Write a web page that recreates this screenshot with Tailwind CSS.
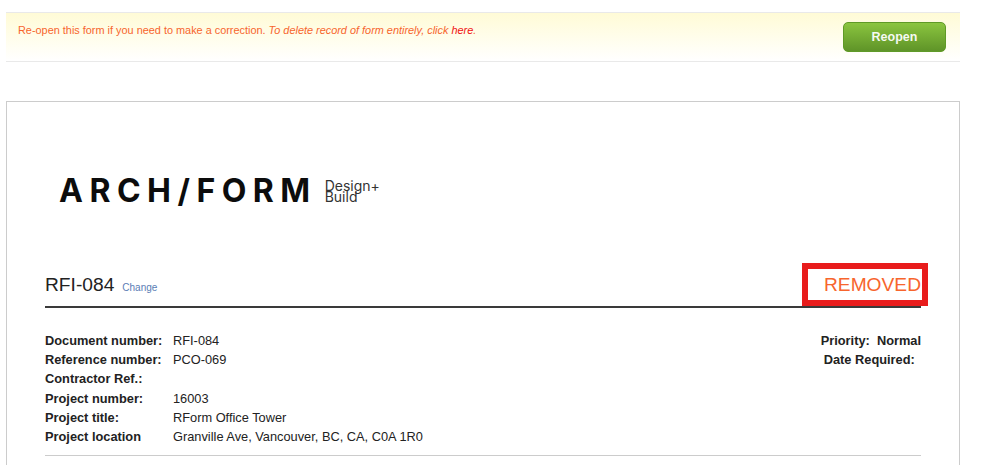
<!DOCTYPE html>
<html lang="en">
<head>
  <meta charset="UTF-8">
  <title>RFI-084</title>
  <script src="https://cdn.jsdelivr.net/npm/@tailwindcss/browser@4"></script>
</head>
<body class="h-[466px] overflow-hidden bg-white font-['Liberation_Sans',Arial,sans-serif] text-[#222]">
  <div class="w-[954px] ml-[6px] pt-3">
    <!-- reopen banner -->
    <div class="h-[50px] flex justify-between border-y border-[#e9e9e9] bg-gradient-to-b from-[#fffbd6] to-white pl-3 pr-[14px]">
      <p class="pt-[10px] text-[10.9px] leading-[14px] text-[#f7652d]">Re-open this form if you need to make a correction. <em>To delete record of form entirely, click <a href="#" class="text-[#f01010]">here</a>.</em></p>
      <button class="mt-[9px] w-[103px] h-[30px] rounded-[5px] border border-[#5f9a26] bg-gradient-to-b from-[#8bc53f] to-[#5f9428] text-[12.5px] font-bold text-white/95">Reopen</button>
    </div>

    <!-- form card -->
    <div class="relative mt-[39px] h-[364px] overflow-hidden border border-[#cccccc] border-b-0 px-[38px]">
      <div class="h-[162px] pt-[71px] pl-[14px] flex items-start gap-[8px]">
        <span class="font-['Inter',sans-serif] text-[32px] leading-[36px] font-bold tracking-[6.5px] text-[#0c0c0c]">ARCH/FORM</span>
        <span class="mt-[7px] font-['Inter',sans-serif] text-[14px] leading-[11px] text-[#333]">Design+<br>Build</span>
      </div>

      <div class="h-[44px] flex items-end justify-between border-b-2 border-[#3a3a3a] pb-[9px]">
        <div class="flex items-baseline gap-[8px]">
          <h1 class="text-[19.2px] leading-[24px] text-[#222]">RFI-084</h1>
          <a href="#" class="text-[10px] text-[#5b7db5]">Change</a>
        </div>
        <span class="text-[19.2px] leading-[24px] text-[#f7652d]">REMOVED</span>
      </div>

      <div class="mt-[23px] flex justify-between border-b border-[#cccccc] pb-[9px] text-[12.8px] leading-[19.2px]">
        <dl class="grid grid-cols-[128px_1fr]">
          <dt class="font-bold">Document number:</dt><dd>RFI-084</dd>
          <dt class="font-bold">Reference number:</dt><dd>PCO-069</dd>
          <dt class="font-bold">Contractor Ref.:</dt><dd></dd>
          <dt class="font-bold">Project number:</dt><dd>16003</dd>
          <dt class="font-bold">Project title:</dt><dd>RForm Office Tower</dd>
          <dt class="font-bold">Project location</dt><dd>Granville Ave, Vancouver, BC, CA, C0A 1R0</dd>
        </dl>
        <div class="font-bold">
          <p>Priority:&nbsp; Normal</p>
          <p class="pl-[3px]">Date Required:</p>
        </div>
      </div>

      <!-- red annotation box drawn over the status -->
      <div class="absolute left-[795px] top-[161px] w-[126px] h-[43px] border-[6px] border-[#e81c1c]"></div>
    </div>
  </div>
</body>
</html>
